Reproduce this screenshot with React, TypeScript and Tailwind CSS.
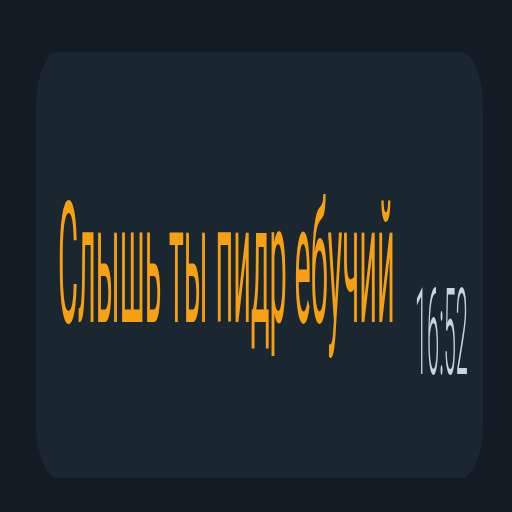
export default function App() {
  return (
    <div className="w-[512px] h-[512px] bg-[#131c25] pt-[52px] pl-[36px] font-['Roboto',sans-serif]">
      <div className="w-[447px] h-[426px] bg-[#1a2630] rounded-[22px/55px] flex items-start">
        <div className="ml-[22px] mt-[132px] w-[340px] shrink-0">
          <span className="inline-block origin-top-left scale-y-[5.5] text-[30.8px] leading-none whitespace-nowrap text-[#f7a012]">
            Слышь ты пидр ебучий
          </span>
        </div>
        <div className="ml-[17px] mt-[222px] w-[56px] shrink-0">
          <span className="inline-block origin-top-left scale-y-[5.56] text-[21.8px] leading-none whitespace-nowrap font-light text-[#cbd4dc]">
            16:52
          </span>
        </div>
      </div>
    </div>
  );
}
